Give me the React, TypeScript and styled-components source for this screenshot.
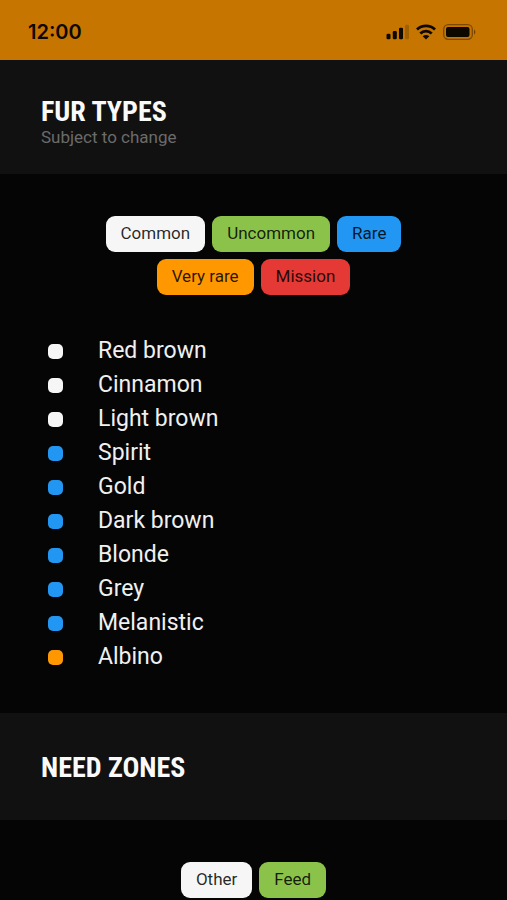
import React from "react";
import styled, { createGlobalStyle } from "styled-components";

const GlobalStyle = createGlobalStyle`
  * { box-sizing: border-box; }
  body {
    margin: 0;
    background: #050505;
    color: #f0f0f0;
    font-family: Roboto, "Liberation Sans", sans-serif;
    overflow: hidden;
  }
`;

const palette = {
  white: "#f6f6f6",
  green: "#8bc34a",
  blue: "#2196f3",
  orange: "#ff9800",
  red: "#e53935",
};
type Tone = keyof typeof palette;

const Screen = styled.main`
  height: 100vh;
  overflow: hidden;
`;

const StatusBar = styled.header`
  display: flex;
  align-items: center;
  justify-content: space-between;
  height: 60px;
  padding: 4px 31px 0 28px;
  background: #c67600;
  color: #0d0800;
`;

const Clock = styled.time`
  font: 600 20px/24px Inter, sans-serif;
`;

const StatusIcons = styled.div`
  display: flex;
  align-items: center;
  gap: 7px;
`;

const SectionHeader = styled.div<{ $withNote?: boolean }>`
  padding: ${(p) => (p.$withNote ? "37px 41px 27px" : "40px 41px 37px")};
  background: #111111;
`;

const Title = styled.h2`
  margin: 0;
  font: 700 28px/30px "Roboto Condensed", Roboto, sans-serif;
  text-transform: uppercase;
  color: #fafafa;
`;

const Note = styled.p`
  margin: 0;
  font-size: 17px;
  line-height: 20px;
  color: #6b6b6b;
`;

const SectionBody = styled.div`
  padding: 42px 41px 39px;
`;

const Filters = styled.div`
  display: flex;
  flex-wrap: wrap;
  justify-content: center;
  gap: 7px;
  width: 100%;
  max-width: 360px;
  margin: 0 auto;
`;

const Chip = styled.button<{ $tone: Tone }>`
  height: 36px;
  padding: 0 15px 2px;
  border: 0;
  border-radius: 9px;
  background: ${(p) => palette[p.$tone]};
  color: rgba(0, 0, 0, 0.85);
  font: 400 17px/20px Roboto, sans-serif;
  cursor: pointer;
`;

const FurList = styled.ul`
  margin: 39px 0 0;
  padding: 0 7px;
  list-style: none;
`;

const FurItem = styled.li`
  display: flex;
  align-items: center;
  gap: 35px;
  font-size: 23px;
  line-height: 34px;
`;

const Swatch = styled.span<{ $tone: Tone }>`
  width: 15px;
  height: 15px;
  border-radius: 5px;
  background: ${(p) => palette[p.$tone]};
`;

const rarities: [string, Tone][] = [
  ["Common", "white"],
  ["Uncommon", "green"],
  ["Rare", "blue"],
  ["Very rare", "orange"],
  ["Mission", "red"],
];

const furs: [string, Tone][] = [
  ["Red brown", "white"],
  ["Cinnamon", "white"],
  ["Light brown", "white"],
  ["Spirit", "blue"],
  ["Gold", "blue"],
  ["Dark brown", "blue"],
  ["Blonde", "blue"],
  ["Grey", "blue"],
  ["Melanistic", "blue"],
  ["Albino", "orange"],
];

const zones: [string, Tone][] = [
  ["Other", "white"],
  ["Feed", "green"],
];

function ChipRow({ items }: { items: [string, Tone][] }) {
  return (
    <Filters>
      {items.map(([label, tone]) => (
        <Chip key={label} type="button" $tone={tone}>
          {label}
        </Chip>
      ))}
    </Filters>
  );
}

function SignalIcon() {
  return (
    <svg width="23" height="16" viewBox="0 0 23 16" fill="currentColor" aria-label="Signal">
      <rect x="0.5" y="9.8" width="4" height="5.4" rx="1.3" />
      <rect x="6.8" y="7" width="4" height="8.2" rx="1.3" />
      <rect x="13" y="3.8" width="4" height="11.4" rx="1.3" />
      <rect x="19" y="0.8" width="4" height="14.4" rx="1.3" opacity="0.2" />
    </svg>
  );
}

function WifiIcon() {
  return (
    <svg width="20" height="16" viewBox="0 0 20 16" fill="none" stroke="currentColor" strokeWidth="2.8" aria-label="Wi-Fi">
      <path d="M1 5.6C6 .7 14 .7 19 5.6" />
      <path d="M4.3 9.4c3.2-3.1 8.2-3.1 11.4 0" />
      <path d="M10 15.4 6.7 12.2c1.8-1.7 4.8-1.7 6.6 0Z" fill="currentColor" stroke="none" />
    </svg>
  );
}

function BatteryIcon() {
  return (
    <svg width="33" height="16" viewBox="0 0 33 16" fill="currentColor" aria-label="Battery">
      <rect x="0.7" y="0.7" width="28.6" height="14.6" rx="4.5" fill="none" stroke="currentColor" strokeWidth="1.3" opacity="0.4" />
      <rect x="3" y="3" width="23.5" height="10" rx="2" />
      <path d="M31 5.5c1.8.6 1.8 4.4 0 5Z" opacity="0.45" />
    </svg>
  );
}

export default function App() {
  return (
    <>
      <GlobalStyle />
      <Screen>
        <StatusBar>
          <Clock>12:00</Clock>
          <StatusIcons>
            <SignalIcon />
            <WifiIcon />
            <BatteryIcon />
          </StatusIcons>
        </StatusBar>
        <section>
          <SectionHeader $withNote>
            <Title>Fur types</Title>
            <Note>Subject to change</Note>
          </SectionHeader>
          <SectionBody>
            <ChipRow items={rarities} />
            <FurList>
              {furs.map(([name, tone]) => (
                <FurItem key={name}>
                  <Swatch $tone={tone} />
                  {name}
                </FurItem>
              ))}
            </FurList>
          </SectionBody>
        </section>
        <section>
          <SectionHeader>
            <Title>Need zones</Title>
          </SectionHeader>
          <SectionBody>
            <ChipRow items={zones} />
          </SectionBody>
        </section>
      </Screen>
    </>
  );
}
